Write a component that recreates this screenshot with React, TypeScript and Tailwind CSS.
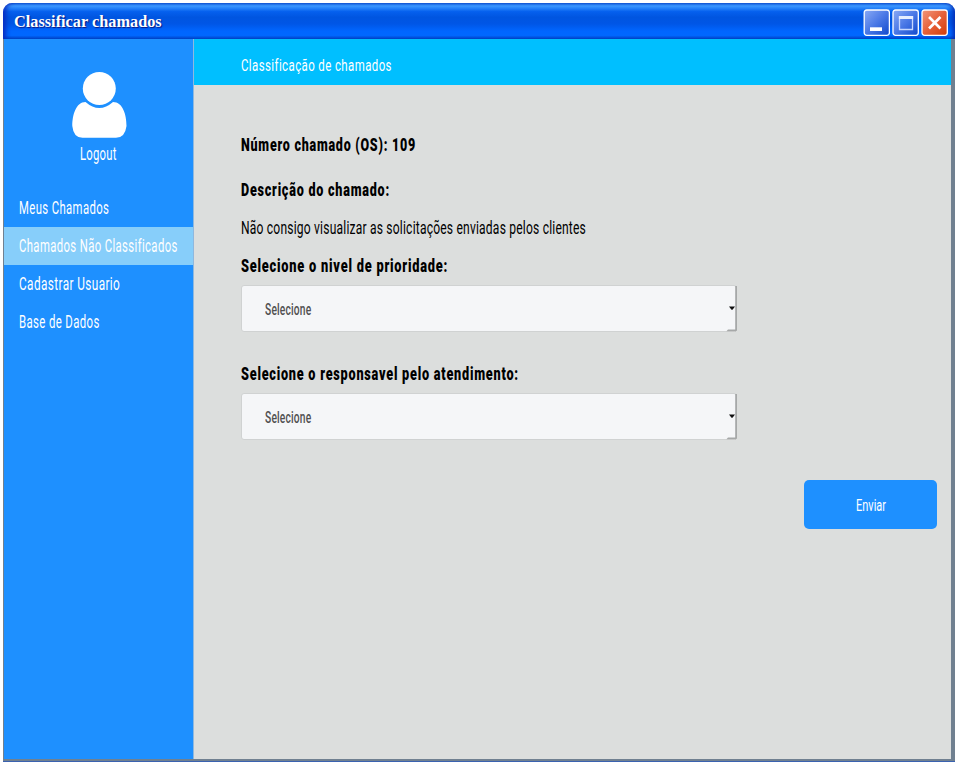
import { useLayoutEffect, useRef, useState } from "react";
import type { ReactNode } from "react";

// Condensed label: the text is squeezed horizontally to fill the given width.
function Fit({ w, className = "", children }: { w: number; className?: string; children: ReactNode }) {
  const ref = useRef<HTMLSpanElement>(null);
  const [scale, setScale] = useState(1);
  useLayoutEffect(() => {
    if (ref.current) setScale(w / ref.current.offsetWidth);
  }, [w]);
  return (
    <span className="block whitespace-nowrap" style={{ width: w }}>
      <span ref={ref} className={`inline-block origin-left align-top ${className}`} style={{ transform: `scaleX(${scale})` }}>
        {children}
      </span>
    </span>
  );
}

const menu = [
  { label: "Meus Chamados", w: 90, active: false },
  { label: "Chamados Não Classificados", w: 159, active: true },
  { label: "Cadastrar Usuario", w: 101, active: false },
  { label: "Base de Dados", w: 81, active: false },
];

function Select() {
  return (
    <div className="relative flex h-[47px] w-[496px] items-center rounded-[3px] border border-[#d0d2d2] bg-[#f5f6f8] pl-[23px] pt-[3px] text-[16.5px] font-medium leading-none text-[#505050]">
      <Fit w={46.5} className="tracking-[0.3px]">Selecione</Fit>
      <svg className="absolute -right-px -top-px" width="12" height="47" viewBox="0 0 12 47">
        <path d="M10.2 1H12v44.500l-1.800 1z" fill="#a6a8a8" />
        <path d="M3 44.500h8v1.800H1.500z" fill="#a6a8a8" />
        <path d="M4 21.500h6L7.500 24.700h-1z" fill="#111" />
      </svg>
    </div>
  );
}

export default function App() {
  return (
    <div className="h-[762px] w-[955px] bg-white pl-[3px] pt-[3px] font-['Roboto','Liberation_Sans',sans-serif]">
      <div className="flex h-full flex-col">
        <header className="flex h-[36px] shrink-0 items-center justify-between rounded-t-[9px] border-l border-[#0831c8] bg-[linear-gradient(180deg,#1560dc_0%,#3c98ff_8%,#2884fa_14%,#0560ee_24%,#0055e0_40%,#0056e6_58%,#0066ff_78%,#0068ff_90%,#0048c8_100%)] pl-[10px] pr-[7px] pt-[3px] shadow-[inset_5px_0_5px_-3px_#0a2bbd,inset_-4px_0_4px_-2px_#062bb0]">
          <h1 className="pb-[2px] font-['Liberation_Serif',serif] text-[17.3px] font-bold leading-none text-white [text-shadow:1px_1px_1px_#0a1883]">
            <Fit w={148}>Classificar chamados</Fit>
          </h1>
          <div className="flex gap-[2px]">
            <svg width="27" height="27" viewBox="0 0 27 27">
              <defs>
                <linearGradient id="blue" x1="0" y1="0" x2="1" y2="1">
                  <stop offset="0" stopColor="#8aaaf5" />
                  <stop offset=".5" stopColor="#4a78e6" />
                  <stop offset="1" stopColor="#1148cc" />
                </linearGradient>
              </defs>
              <rect x="1.200" y="1" width="25.200" height="25.300" rx="2.500" fill="url(#blue)" stroke="#fff" strokeWidth="1.300" />
              <path d="M7 18.300h12v3.700H7z" fill="#fff" />
            </svg>
            <svg width="27" height="27" viewBox="0 0 27 27">
              <rect x="1" y="1" width="25.300" height="25.300" rx="2.500" fill="url(#blue)" stroke="#fff" strokeWidth="1.300" />
              <path d="M7.500 8v12.500h13V8z" fill="none" stroke="#c7d8ff" strokeWidth="1.300" />
              <path d="M6.900 7h14.200v3H6.900z" fill="#e6eeff" />
            </svg>
            <svg width="27" height="27" viewBox="0 0 27 27">
              <defs>
                <linearGradient id="red" x1="0" y1="0" x2="1" y2="1">
                  <stop offset="0" stopColor="#f0977c" />
                  <stop offset=".5" stopColor="#e66038" />
                  <stop offset="1" stopColor="#d23c08" />
                </linearGradient>
              </defs>
              <rect x="1" y="1" width="25.300" height="25.300" rx="2.500" fill="url(#red)" stroke="#fff" strokeWidth="1.300" />
              <path d="M9 9l9.500 9.500M18.500 9L9 18.500" stroke="#fff" strokeWidth="2.700" strokeLinecap="square" />
            </svg>
          </div>
        </header>
        <div className="flex min-h-0 flex-1 border-b-2 border-l border-r-4 border-[#708090]">
          <aside className="w-[190px] shrink-0 border-r border-[#8fb8de] bg-[#1e90ff] text-[18px] leading-none text-white">
            <div className="flex h-[150px] flex-col items-center pt-[33px]">
              <svg width="55" height="66" viewBox="0 0 55 66" className="ml-px" fill="#fff">
                <circle cx="27.3" cy="16.5" r="16.5" />
                <path d="M13.500 30Q27.300 42 41 30C51 30 54.500 43 54.500 54Q53 65.800 44 65.800H10.500Q1.500 65.800.3 54C.3 43 4 30 13.500 30Z" />
              </svg>
              <div className="mr-px mt-[7px]">
                <Fit w={37} className="tracking-[0.4px]">Logout</Fit>
              </div>
            </div>
            <nav>
              {menu.map((item) => (
                <div
                  key={item.label}
                  className={`flex h-[38px] items-center pl-[15px] ${item.active ? "bg-[#87cefa]" : ""}`}
                >
                  <Fit w={item.w} className="tracking-[0.6px]">{item.label}</Fit>
                </div>
              ))}
            </nav>
          </aside>
          <main className="flex flex-1 flex-col bg-[#dcdedd] leading-none text-black">
            <div className="flex h-[46px] shrink-0 items-center bg-[#00bfff] pl-[47px] pt-[6px] text-[17px] text-white">
              <Fit w={151} className="tracking-[0.6px]">Classificação de chamados</Fit>
            </div>
            <div className="flex flex-col pl-[47px] pt-[51px] text-[18px] font-black">
              <Fit w={175} className="tracking-[1.1px]">Número chamado (OS): 109</Fit>
              <div className="mt-[27px]">
                <Fit w={149} className="tracking-[1.1px]">Descrição do chamado:</Fit>
              </div>
              <div className="mt-[20px] font-normal">
                <Fit w={345} className="tracking-[0.3px]">Não consigo visualizar as solicitações enviadas pelos clientes</Fit>
              </div>
              <div className="mt-[20px]">
                <Fit w={207} className="tracking-[1.1px]">Selecione o nivel de prioridade:</Fit>
              </div>
              <div className="mt-[10px]">
                <Select />
              </div>
              <div className="mt-[33px]">
                <Fit w={278} className="tracking-[1.1px]">Selecione o responsavel pelo atendimento:</Fit>
              </div>
              <div className="mt-[10px]">
                <Select />
              </div>
            </div>
            <button className="mr-[14px] mt-[40px] flex h-[49px] w-[133px] items-center justify-center self-end rounded-[5px] bg-[#1e90ff] pt-[3px] text-[16.5px] text-white">
              <Fit w={30} className="text-left">Enviar</Fit>
            </button>
          </main>
        </div>
        <div className="h-px shrink-0 bg-[#3a62b0]" />
      </div>
    </div>
  );
}
